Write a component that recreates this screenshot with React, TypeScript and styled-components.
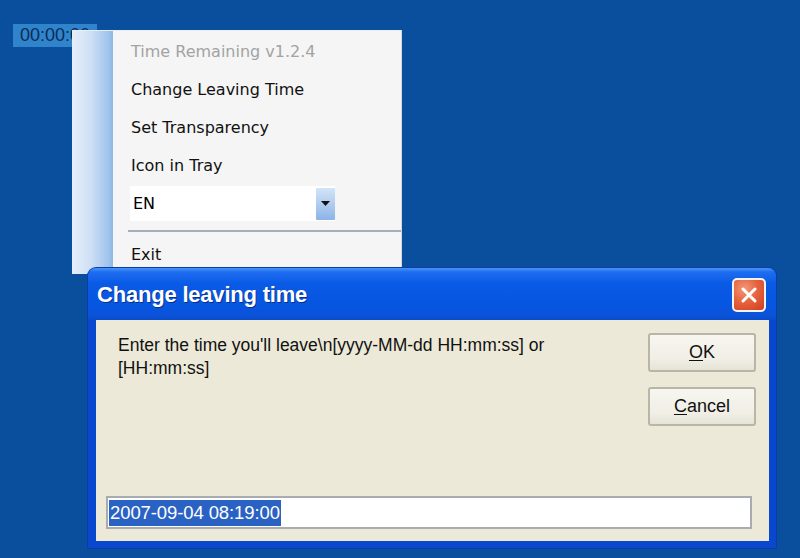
import React from "react";
import styled, { createGlobalStyle } from "styled-components";

const GlobalStyle = createGlobalStyle`
  html, body { margin: 0; padding: 0; background: #0a4f9e; }
  * { box-sizing: border-box; }
`;

const Desktop = styled.div`
  position: relative;
  width: 800px;
  height: 558px;
  overflow: hidden;
  background: #0a4f9e;
  font-family: "Liberation Sans", Arial, sans-serif;
`;

const TimerLabel = styled.div`
  position: absolute;
  left: 13px;
  top: 24px;
  width: 84px;
  height: 23px;
  padding-left: 7px;
  background: #2f84cb;
  color: #0a2b58;
  font-size: 18px;
  line-height: 23px;
  white-space: nowrap;
  overflow: hidden;
`;

const ContextMenu = styled.div`
  position: absolute;
  left: 72px;
  top: 30px;
  width: 330px;
  height: 244px;
  display: flex;
  background: #f5f5f5;
  border-top: 1px solid #e8eef6;
  border-right: 1px solid #d8d8d8;
`;

const Strip = styled.div`
  width: 41px;
  flex: none;
  background: linear-gradient(90deg, #e6effa 0%, #cfe0f5 45%, #9fc3ec 90%, #8cb6e6 100%);
`;

const MenuList = styled.div`
  flex: 1;
  display: flex;
  flex-direction: column;
  padding-top: 1px;
  font-family: "DejaVu Sans", Tahoma, sans-serif;
  font-size: 16px;
`;

const MenuItem = styled.div<{ $disabled?: boolean; $offset?: number }>`
  height: 38px;
  display: flex;
  align-items: center;
  padding-left: 18px;
  margin-top: ${(p) => p.$offset ?? 0}px;
  color: ${(p) => (p.$disabled ? "#a3a3a3" : "#111")};
`;

const ComboRow = styled.div`
  margin: 2px 0 0 17px;
  width: 205px;
  height: 35px;
  display: flex;
  align-items: center;
  justify-content: space-between;
  background: #ffffff;
  padding: 2px 0 2px 3px;
`;

const ComboButton = styled.div`
  width: 19px;
  height: 32px;
  display: flex;
  align-items: center;
  justify-content: center;
  background: linear-gradient(180deg, #d3e4f8 0%, #b0cdf0 50%, #8ab3e6 100%);
  border-radius: 1px;
`;

const Separator = styled.div`
  margin: 9px 0 0 15px;
  height: 2px;
  background: #a6aec0;
`;

const Dialog = styled.div`
  position: absolute;
  left: 88px;
  top: 268px;
  width: 688px;
  height: 280px;
  display: flex;
  flex-direction: column;
  background: #0a47cf;
  border-radius: 8px 8px 0 0;
  box-shadow: 0 0 0 1px #0a3da8;
`;

const TitleBar = styled.div`
  height: 52px;
  flex: none;
  display: flex;
  align-items: center;
  justify-content: space-between;
  padding: 2px 10px 0 9px;
  border-radius: 8px 8px 0 0;
  background: linear-gradient(
    180deg,
    #4a94f8 0%,
    #1e6cf0 8%,
    #0a5ae6 30%,
    #0756e2 70%,
    #0a52d8 92%,
    #0a4bc8 100%
  );
`;

const Title = styled.div`
  color: #ffffff;
  font-weight: bold;
  font-size: 22px;
  letter-spacing: -0.2px;
  text-shadow: 1px 1px 0 #0a2f8a;
`;

const CloseButton = styled.div`
  width: 34px;
  height: 34px;
  display: flex;
  align-items: center;
  justify-content: center;
  border: 2px solid #f4f4f4;
  border-radius: 5px;
  background: radial-gradient(circle at 35% 30%, #f29a7c 0%, #e6643f 45%, #cf3d21 100%);
`;

const BodyFrame = styled.div`
  flex: 1;
  padding: 0 7px 7px 8px;
  display: flex;
`;

const Body = styled.div`
  flex: 1;
  display: flex;
  flex-direction: column;
  background: #ece9d8;
  padding: 13px 13px 12px 10px;
`;

const TopRow = styled.div`
  display: flex;
  justify-content: space-between;
`;

const Prompt = styled.div`
  padding: 1px 0 0 12px;
  font-family: "Liberation Sans", Arial, sans-serif;
  font-size: 17.5px;
  line-height: 23px;
  color: #111;
  white-space: nowrap;
`;

const ButtonColumn = styled.div`
  display: flex;
  flex-direction: column;
  gap: 15px;
`;

const Button = styled.div`
  width: 108px;
  height: 39px;
  display: flex;
  align-items: center;
  justify-content: center;
  border: 2px solid #b9b6a8;
  border-radius: 3px;
  background: linear-gradient(180deg, #f7f6f0 0%, #f0eee5 70%, #e6e3d6 100%);
  font-size: 18px;
  color: #111;
`;

const Mnemonic = styled.span`
  text-decoration: underline;
  text-underline-offset: 2px;
`;

const Spacer = styled.div`
  flex: 1;
`;

const TextInput = styled.div`
  margin-right: 4px;
  height: 33px;
  display: flex;
  align-items: center;
  background: #ffffff;
  border: 2px solid #a8abb0;
  padding-left: 1px;
`;

const Selected = styled.span`
  background: #2a62c4;
  color: #ffffff;
  font-size: 18.5px;
  line-height: 26px;
  padding: 0 1px;
  letter-spacing: -0.1px;
`;

export default function App() {
  return (
    <>
      <GlobalStyle />
      <Desktop>
        <TimerLabel>00:00:00</TimerLabel>
        <ContextMenu>
          <Strip />
          <MenuList>
            <MenuItem $disabled>Time Remaining v1.2.4</MenuItem>
            <MenuItem>Change Leaving Time</MenuItem>
            <MenuItem>Set Transparency</MenuItem>
            <MenuItem>Icon in Tray</MenuItem>
            <ComboRow>
              <span>EN</span>
              <ComboButton>
                <svg width="9" height="5" viewBox="0 0 9 5">
                  <path d="M0 0h9L4.5 5z" fill="#111" />
                </svg>
              </ComboButton>
            </ComboRow>
            <Separator />
            <MenuItem $offset={3}>Exit</MenuItem>
          </MenuList>
        </ContextMenu>
        <Dialog>
          <TitleBar>
            <Title>Change leaving time</Title>
            <CloseButton>
              <svg width="18" height="18" viewBox="0 0 18 18">
                <path d="M3 3L15 15M15 3L3 15" stroke="#fff" strokeWidth="3" strokeLinecap="round" />
              </svg>
            </CloseButton>
          </TitleBar>
          <BodyFrame>
            <Body>
              <TopRow>
                <Prompt>
                  Enter the time you'll leave\n[yyyy-MM-dd HH:mm:ss] or
                  <br />
                  [HH:mm:ss]
                </Prompt>
                <ButtonColumn>
                  <Button>
                    <Mnemonic>O</Mnemonic>K
                  </Button>
                  <Button>
                    <Mnemonic>C</Mnemonic>ancel
                  </Button>
                </ButtonColumn>
              </TopRow>
              <Spacer />
              <TextInput>
                <Selected>2007-09-04 08:19:00</Selected>
              </TextInput>
            </Body>
          </BodyFrame>
        </Dialog>
      </Desktop>
    </>
  );
}
